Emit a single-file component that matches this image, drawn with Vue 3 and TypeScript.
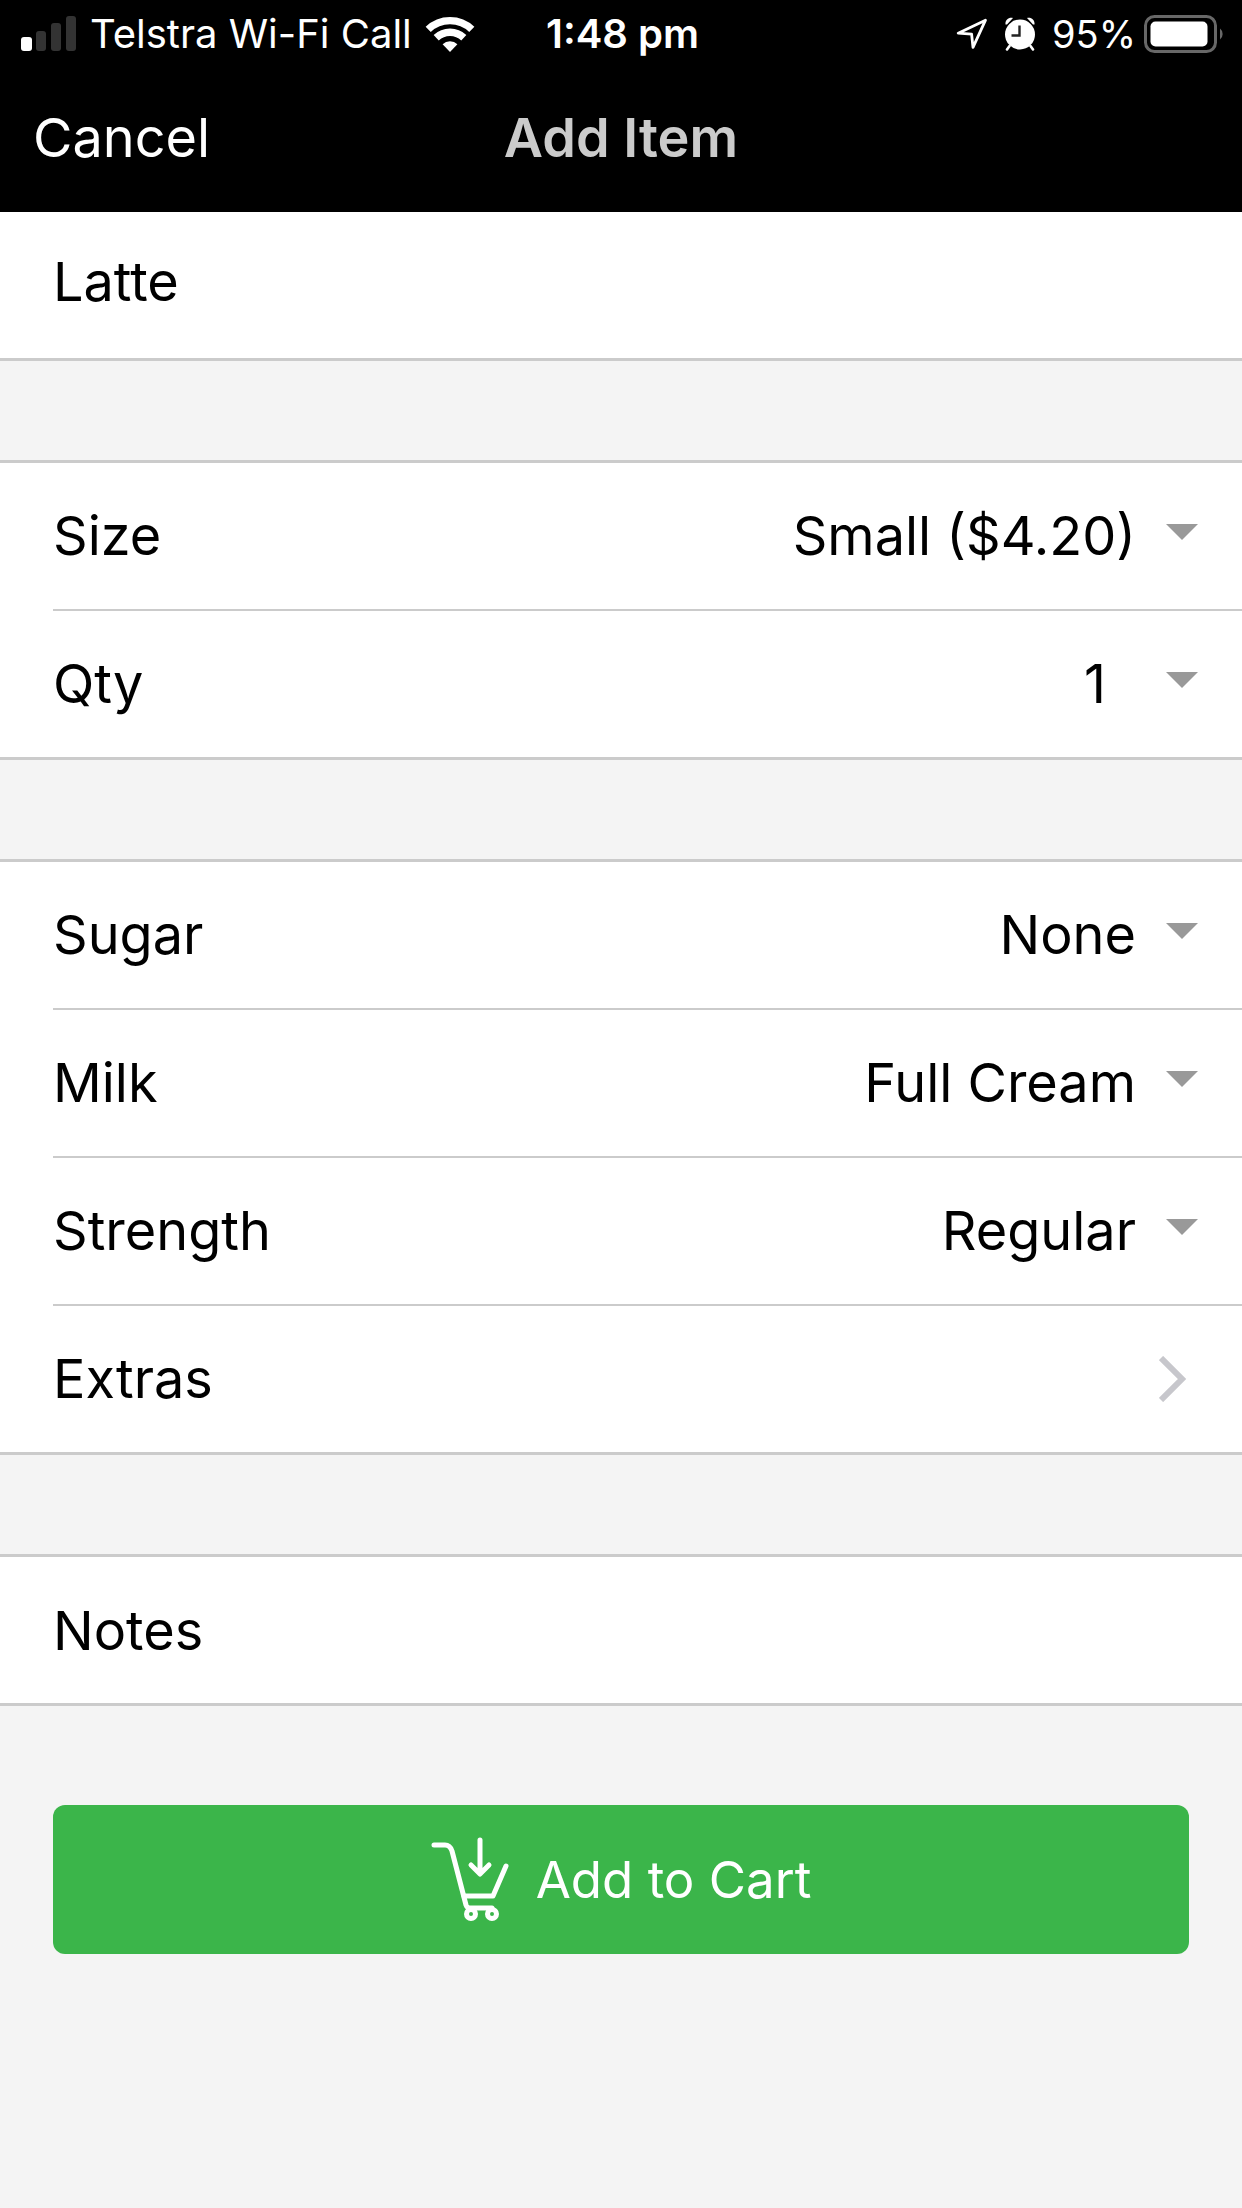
<script setup lang="ts">
import { reactive, ref } from 'vue'

interface Field {
  id: string
  label: string
  options: string[]
  short?: boolean
}

const orderFields: Field[] = [
  { id: 'size', label: 'Size', options: ['Small ($4.20)'] },
  { id: 'qty', label: 'Qty', options: ['1', '2', '3', '4'], short: true },
]

const optionFields: Field[] = [
  { id: 'sugar', label: 'Sugar', options: ['None'] },
  { id: 'milk', label: 'Milk', options: ['Full Cream'] },
  { id: 'strength', label: 'Strength', options: ['Regular'] },
]

const groups = [
  { name: 'order', fields: orderFields, extras: false },
  { name: 'options', fields: optionFields, extras: true },
]

const values = reactive<Record<string, string>>({
  size: 'Small ($4.20)',
  qty: '1',
  sugar: 'None',
  milk: 'Full Cream',
  strength: 'Regular',
})
const notes = ref('')
</script>

<template>
  <div class="screen">
    <header class="top">
      <div class="status">
        <div class="status-left">
          <svg class="signal" width="56" height="36" viewBox="0 0 56 36" aria-hidden="true">
            <rect x="0" y="21" width="11" height="14" rx="3" fill="#fff" />
            <rect x="15" y="15" width="10" height="20" rx="3" fill="#333" />
            <rect x="30" y="7" width="10" height="28" rx="3" fill="#333" />
            <rect x="45" y="0" width="10" height="35" rx="3" fill="#333" />
          </svg>
          <span>Telstra Wi-Fi Call</span>
          <svg width="50" height="38" viewBox="0 0 50 38" aria-hidden="true">
            <g fill="none" stroke="#fff" stroke-width="7.4">
              <path d="M3.2 14.4A31.5 31.5 0 0 1 46.8 14.4" />
              <path d="M11.2 22.8A20 20 0 0 1 38.8 22.8" />
            </g>
            <path d="M25 37 17.6 29.2A10.6 10.6 0 0 1 32.4 29.2Z" fill="#fff" />
          </svg>
        </div>
        <span class="time">1:48 pm</span>
        <div class="status-right">
          <svg width="32" height="32" viewBox="0 0 32 32" aria-hidden="true">
            <path d="M29.5 2.2 2.2 15.2 15.6 16.2 17 29.4Z" fill="none" stroke="#fff" stroke-width="2.8" stroke-linejoin="round" />
          </svg>
          <svg class="alarm" width="32" height="36" viewBox="0 0 32 36" aria-hidden="true">
            <circle cx="16" cy="18.500" r="15" fill="#fff" />
            <path d="M1.500 8.500C1 4 4.500 1 9 2L3 8.500ZM30.500 8.500C31 4 27.500 1 23 2L29 8.500Z" fill="#fff" />
            <path d="M5.500 30 3 33.500M26.500 30 29 33.500" stroke="#fff" stroke-width="2.600" stroke-linecap="round" />
            <path d="M15.500 9.500V19.500H7.500" fill="none" stroke="#222" stroke-width="2.400" />
          </svg>
          <span class="charge">95%</span>
          <svg class="battery" width="80" height="38" viewBox="0 0 80 38" aria-hidden="true">
            <rect x="1.5" y="1.5" width="70" height="35" rx="9" fill="none" stroke="#686868" stroke-width="3" />
            <rect x="6.5" y="6.5" width="57" height="25" rx="5" fill="#fff" />
            <path d="M76 13.5A7 7 0 0 1 76 24.5Z" fill="#686868" />
          </svg>
        </div>
      </div>
      <nav class="nav">
        <button type="button" class="cancel">Cancel</button>
        <h1>Add Item</h1>
      </nav>
    </header>

    <main>
      <div class="item-name">Latte</div>

      <section v-for="group in groups" :key="group.name" class="card">
        <div v-for="field in group.fields" :key="field.id" class="row">
          <label :for="field.id">{{ field.label }}</label>
          <select :id="field.id" v-model="values[field.id]" :class="{ short: field.short }">
            <option v-for="option in field.options" :key="option" :value="option">{{ option }}</option>
          </select>
          <svg class="caret" width="32" height="16" viewBox="0 0 32 16" aria-hidden="true">
            <path d="M0 0H32L16 16Z" fill="#999" />
          </svg>
        </div>
        <button v-if="group.extras" type="button" class="row extras">
          <span>Extras</span>
          <svg width="28" height="46" viewBox="0 0 28 46" aria-hidden="true">
            <path d="M2 2 23 23 2 44" fill="none" stroke="#c7c7cc" stroke-width="6" />
          </svg>
        </button>
      </section>

      <section class="card">
        <input v-model="notes" class="notes" type="text" placeholder="Notes" aria-label="Notes" />
      </section>

      <button type="button" class="add">
        <svg width="78" height="86" viewBox="0 0 78 86" aria-hidden="true">
          <g fill="none" stroke="#fff" stroke-width="5" stroke-linecap="round" stroke-linejoin="round">
            <path d="M3 8H14Q19 8 21 14L35 68Q36 71 39 71H61" />
            <path d="M33 59H62L75 29" />
            <path d="M49 3V36M40 28 49 37 58 28" />
            <circle cx="40" cy="77" r="4.500" />
            <circle cx="61" cy="77" r="4.500" />
          </g>
        </svg>
        <span>Add to Cart</span>
      </button>
    </main>
  </div>
</template>

<style>
body {
  margin: 0;
  background: #f4f4f4;
}
</style>

<style scoped>
.screen {
  min-height: 100vh;
  background: #f4f4f4;
  color: #000;
  font-family: Inter, "Liberation Sans", sans-serif;
  font-size: 54px;
  line-height: 66px;
}

button,
input,
select {
  margin: 0;
  padding: 0;
  border: 0;
  border-radius: 0;
  background: none;
  color: inherit;
  font: inherit;
}

svg {
  display: block;
  flex: none;
}

.top {
  background: #000;
  color: #fff;
}

.status {
  display: grid;
  grid-template-columns: 1fr auto 1fr;
  align-items: center;
  height: 68px;
  padding: 0 18px 0 21px;
  font-size: 40px;
  line-height: 46px;
}

.status-left,
.status-right {
  display: flex;
  align-items: center;
  white-space: nowrap;
}

.status-left {
  gap: 13px;
}

.status-right {
  justify-content: flex-end;
  gap: 16px;
}

.charge {
  font-size: 38px;
}

.battery {
  margin-left: -8px;
}

.time {
  font-weight: 600;
}

.nav {
  display: grid;
  grid-template-columns: 1fr auto 1fr;
  align-items: center;
  height: 139px;
  padding: 0 33px 5px;
}

.cancel {
  justify-self: start;
}

h1 {
  margin: 0;
  color: #cbcbcb;
  font-size: 54px;
  font-weight: 600;
}

.item-name {
  padding: 37px 53px 43px;
  border-bottom: 3px solid #cbcbcb;
  background: #fff;
}

.card {
  margin-top: 99px;
  padding-left: 53px;
  border-top: 3px solid #cbcbcb;
  border-bottom: 3px solid #cbcbcb;
  background: #fff;
}

.row {
  display: flex;
  align-items: center;
  width: 100%;
  height: 146px;
  padding-right: 44px;
  box-sizing: border-box;
}

.row + .row {
  height: 148px;
  border-top: 2px solid #cbcbcb;
}

select {
  flex: 1;
  height: 100%;
  padding-right: 30px;
  appearance: none;
  text-align: right;
  text-align-last: right;
}

select.short {
  padding-right: 60px;
}

.caret {
  margin-bottom: 9px;
}

.extras {
  justify-content: space-between;
  padding-right: 55px;
}

.notes {
  display: block;
  width: 100%;
  height: 146px;
}

.notes::placeholder {
  color: #000;
  opacity: 1;
}

.add {
  display: flex;
  align-items: center;
  justify-content: center;
  gap: 27px;
  width: calc(100% - 106px);
  height: 149px;
  margin: 99px 53px 0;
  border-radius: 12px;
  background: #3bb54a;
  color: #fff;
  font-size: 51px;
}
</style>
